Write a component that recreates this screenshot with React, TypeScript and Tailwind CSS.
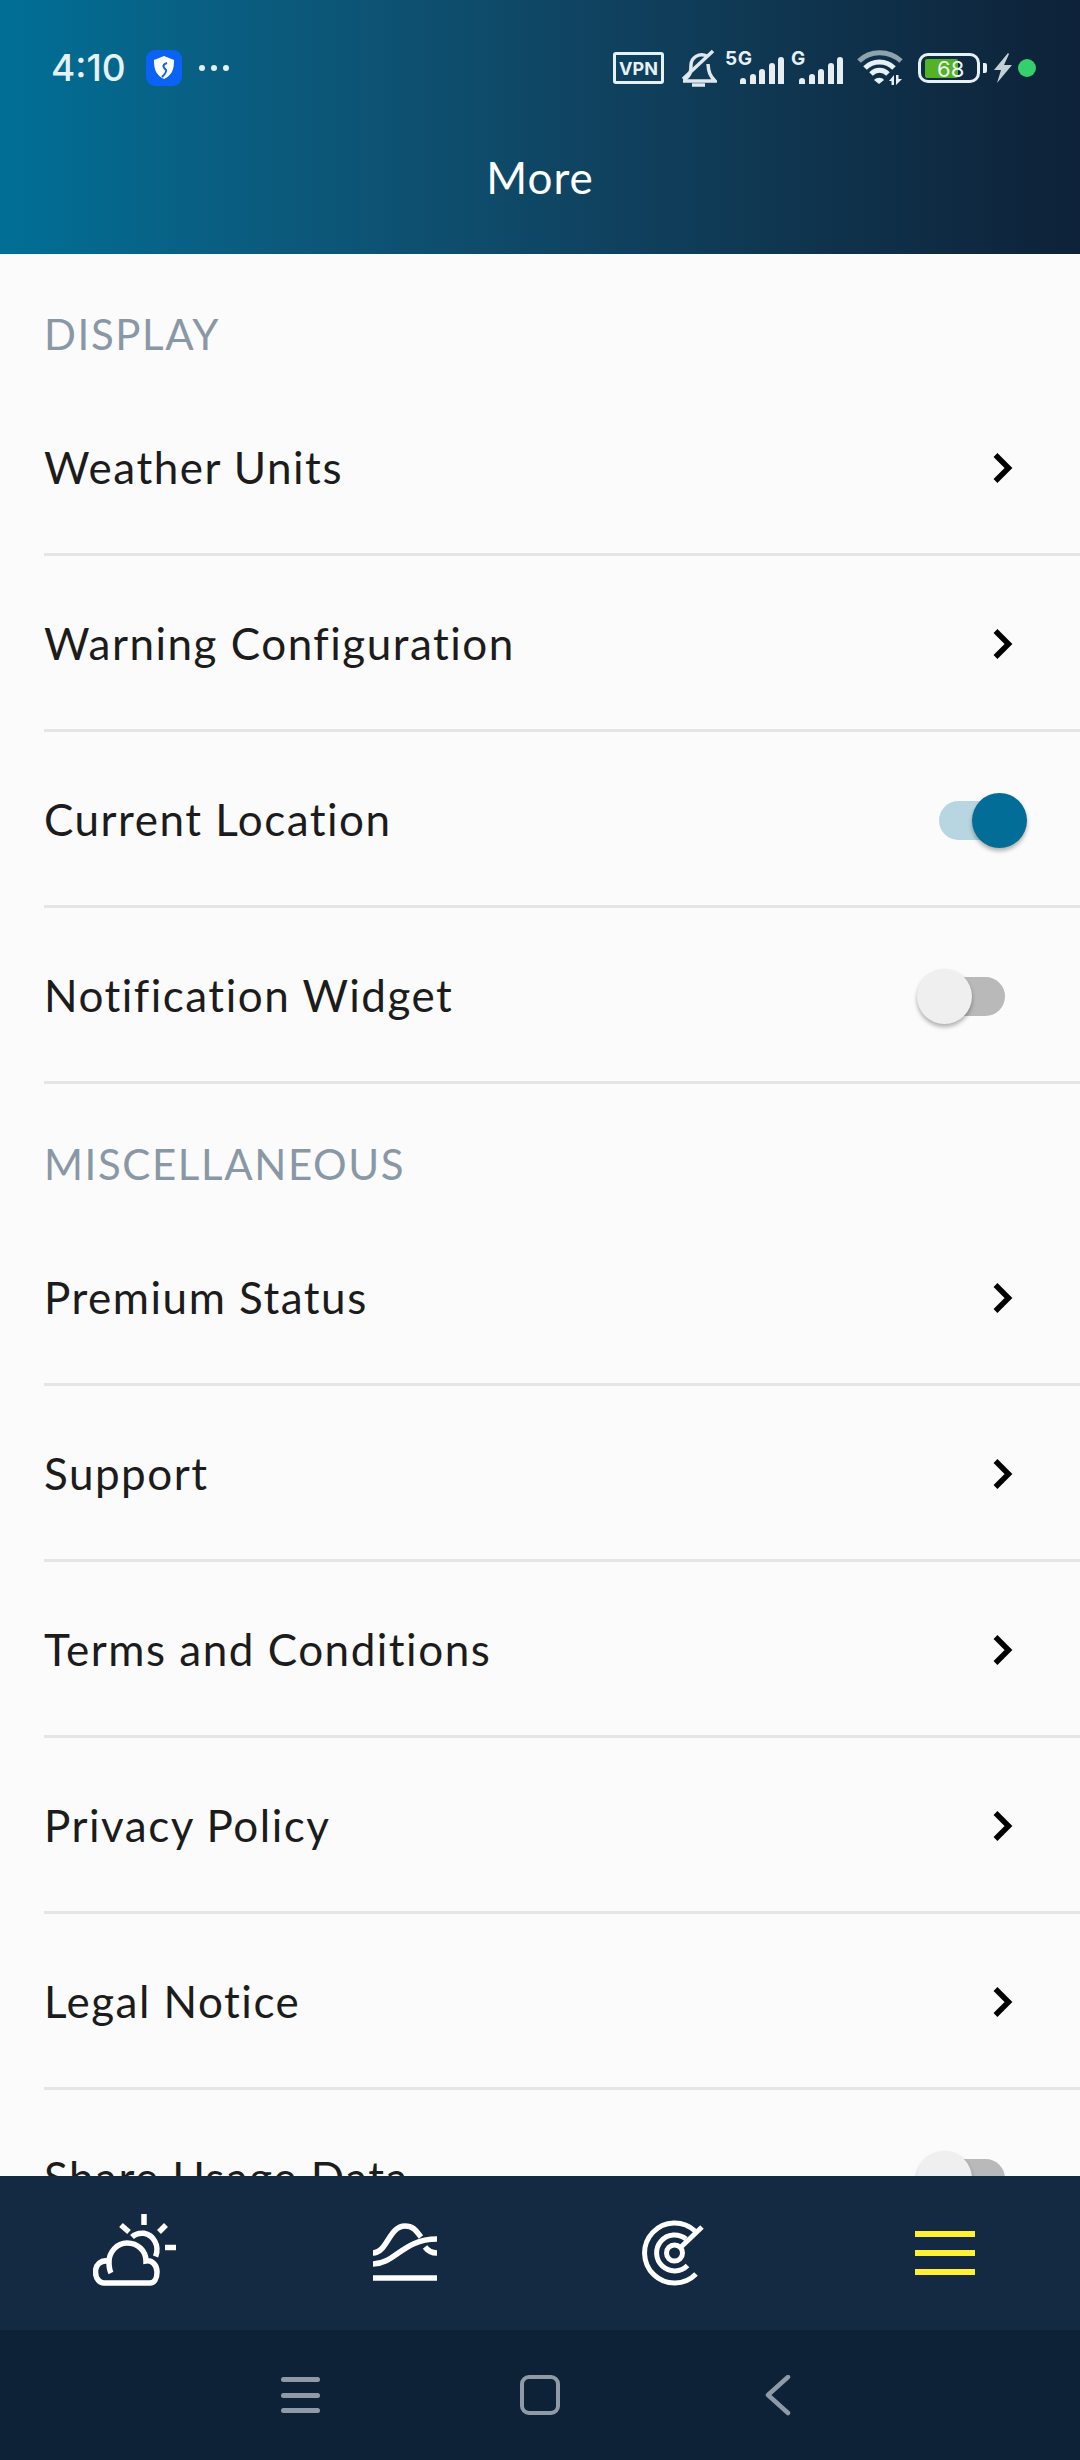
const F = "font-['Lato','Noto_Sans',sans-serif]";

function Chevron() {
  return (
    <svg width="24" height="34" viewBox="0 0 24 34" fill="none" className="shrink-0">
      <path d="M3.5 4 L16.5 17 L3.5 30" stroke="#000" strokeWidth="5.5" />
    </svg>
  );
}

function Toggle({ on }: { on: boolean }) {
  return (
    <div className={`relative w-[66px] h-[39px] rounded-full shrink-0 ${on ? "bg-[#b8d6e2]" : "bg-[#b9b9b9]"}`}>
      <div
        className={`absolute top-[-8px] w-[55px] h-[55px] rounded-full shadow-[0_3px_4px_rgba(0,0,0,0.3)] ${
          on ? "left-[33px] bg-[#026d96]" : "left-[-22px] bg-[#efefef]"
        }`}
      />
    </div>
  );
}

function Row({ label, toggle }: { label: string; toggle?: "on" | "off" }) {
  return (
    <div className="ml-[44px] h-[176px] shrink-0 flex items-center border-b-[3px] border-[#e5e5e5] pt-[3px]">
      <span className="text-[44px] leading-[56px] tracking-[1.5px] text-[#1c1c1c] mb-[3px]">{label}</span>
      <div className="ml-auto flex items-center">
        {toggle ? (
          <div className="mr-[75px]">
            <Toggle on={toggle === "on"} />
          </div>
        ) : (
          <div className="mr-[64px]">
            <Chevron />
          </div>
        )}
      </div>
    </div>
  );
}

function Section({ title }: { title: string }) {
  return (
    <div className="h-[126px] shrink-0 pl-[44px] pt-[52px]">
      <span className="block text-[42px] leading-[56px] tracking-[1.6px] text-[#8a98a6]">{title}</span>
    </div>
  );
}

function Signal({ label, w, ml }: { label: string; w: number; ml: string }) {
  const hs = [6, 10, 15, 21, 27];
  return (
    <div className={`relative h-[32px] flex items-end justify-end gap-[3.5px] ${ml}`} style={{ width: w }}>
      <span className="absolute left-0 top-[-2px] text-[19px] leading-[18px] font-bold tracking-[0.5px] text-[#e6f1f6] font-['Inter',sans-serif]">
        {label}
      </span>
      {hs.map((h) => (
        <div key={h} className="w-[6px] bg-[#e6eef2] rounded-t-[3px]" style={{ height: h }} />
      ))}
    </div>
  );
}

function StatusBar() {
  return (
    <div className="h-[92px] pt-[44px] pl-[51px] pr-[44px] flex items-center text-[#e6f1f6]">
      <span className="text-[37px] leading-[44px] font-medium font-['Inter',sans-serif]">4:10</span>
      <svg width="36" height="36" viewBox="0 0 36 36" className="ml-[20px]">
        <rect width="36" height="36" rx="9" fill="#0a63f5" />
        <path d="M18 6 L28 10 C28 20 26 25 18 29 C10 25 8 20 8 10 Z" fill="#fff" />
        <path d="M21 13 C15 15 18 18 20 20 C21 22 18 25 16 27" stroke="#0a63f5" strokeWidth="2" fill="none" />
      </svg>
      <div className="ml-[17px] flex gap-[6px]">
        <div className="w-[6px] h-[6px] rounded-full bg-[#e6f1f6]" />
        <div className="w-[6px] h-[6px] rounded-full bg-[#e6f1f6]" />
        <div className="w-[6px] h-[6px] rounded-full bg-[#e6f1f6]" />
      </div>
      <div className="ml-auto flex items-center">
        <div className="w-[51px] h-[32px] border-[3px] border-[#e6f1f6] rounded-[3px] flex items-center justify-center text-[18px] font-bold font-['Inter',sans-serif]">
          VPN
        </div>
        <svg width="36" height="38" viewBox="0 0 36 38" className="ml-[17px]" fill="none" stroke="#dfe8ec" strokeWidth="3.5">
          <path d="M10 16 C10 9 18 3 26 7" />
          <path d="M10 16 C10 22 10 26 3 31" />
          <path d="M27 15 C27.5 23 29 27 34 32 H2" />
          <path d="M32 2 L2 30" />
          <path d="M11 36 H24" />
        </svg>
        <Signal label="5G" w={59} ml="ml-[8px]" />
        <Signal label="G" w={52} ml="ml-[7px]" />
        <svg width="46" height="36" viewBox="0 0 46 36" className="ml-[14px]" fill="none">
          <path d="M2 11 C13 0 32 0 44 11" stroke="#8fa3ae" strokeWidth="5" />
          <path d="M8 18 C16 10 29 10 37 18" stroke="#e6f1f6" strokeWidth="5" />
          <path d="M14 24 C19 19 26 19 31 24" stroke="#e6f1f6" strokeWidth="5" />
          <path d="M17 30 L22 34 L27 30 C25 27 20 27 17 30 Z" fill="#e6f1f6" />
          <path d="M37 25 V35 H34.5 V31 H32 Z" fill="#e6f1f6" />
          <path d="M39 35 V25 H41.5 V29 H45 Z" fill="#e6f1f6" />
        </svg>
        <div className="ml-[15px] relative w-[62px] h-[30px] border-[3px] border-[#e6f1f6] rounded-[10px] flex items-center pl-[4px]">
          <div className="w-[33px] h-[19px] bg-[#54b227] rounded-[2px]" />
          <span className="absolute left-[16px] top-[-2px] text-[22px] leading-[30px] text-[#eef6f2] font-['Inter',sans-serif]">68</span>
        </div>
        <div className="ml-[3px] w-[4px] h-[10px] rounded-r-[2px] bg-[#e6f1f6]" />
        <svg width="18" height="30" viewBox="0 0 18 30" className="ml-[7px]">
          <path d="M14 0 L0 17 H7 L3 30 L18 12 H10 L15 1 Z" fill="#c5d0d6" />
        </svg>
        <div className="ml-[6px] w-[18px] h-[18px] rounded-full bg-[#33d06c]" />
      </div>
    </div>
  );
}

function TabBar() {
  return (
    <div className="h-[154px] shrink-0 bg-[#132a42] flex items-start">
      <div className="flex-1 flex justify-center pt-[38px]">
        <svg width="84" height="73" viewBox="0 0 84 73" fill="none" stroke="#fff" strokeWidth="5.5">
          <path d="M11 69 H57 C61 69 64 65 64 58 C64 51 59 46 53 47 C53 37 45 29 34 29 C24 29 16 38 16 48 C16 52 16.5 56 18 59" />
          <path d="M16 47.5 C8 45 2.5 51 2.5 58 C2.5 65 7 69 11 69" />
          <path d="M39 23 C43 19 47 19 51 19.3 C60 21 67 31 62.6 42.6" />
          <path d="M51 0 V11" />
          <path d="M28 11 L36 18" />
          <path d="M73 11 L66 18" />
          <path d="M72 33.5 H83" />
        </svg>
      </div>
      <div className="flex-1 flex justify-center pt-[47px]">
        <svg width="66" height="58" viewBox="0 0 64 58" fill="none" stroke="#fff" strokeWidth="5.5">
          <path d="M0 30 C14 30 16 3 32 3 C41 3 44 9 48 14" />
          <path d="M0 41 C22 41 30 16 64 16" />
          <path d="M52 24 C55 28 58 30 64 30" />
          <path d="M0 55 H64" />
        </svg>
      </div>
      <div className="flex-1 flex justify-center pt-[44px]">
        <svg width="66" height="68" viewBox="0 0 66 68" fill="none" stroke="#fff" strokeWidth="5">
          <path d="M53 11 A30 30 0 1 0 54 54" />
          <path d="M44 19 A18 18 0 1 0 45.5 45.5" />
          <circle cx="32.5" cy="33" r="8" />
          <path d="M39 27 L60 7" />
        </svg>
      </div>
      <div className="flex-1 flex justify-center pt-[55px]">
        <div className="w-[60px] flex flex-col gap-[13px]">
          <div className="h-[6px] bg-[#fff035]" />
          <div className="h-[6px] bg-[#fff035]" />
          <div className="h-[6px] bg-[#fff035]" />
        </div>
      </div>
    </div>
  );
}

function NavBar() {
  return (
    <div className="h-[130px] shrink-0 bg-[#0d2237] flex items-start pl-[281px] pt-[45px]">
      <div className="w-[39px] mt-[2px] flex flex-col gap-[10.5px]">
        <div className="h-[5px] rounded-full bg-[#8f9aa6]" />
        <div className="h-[5px] rounded-full bg-[#8f9aa6]" />
        <div className="h-[5px] rounded-full bg-[#8f9aa6]" />
      </div>
      <div className="ml-[200px] w-[40px] h-[40px] border-[4px] border-[#8f9aa6] rounded-[9px]" />
      <svg width="26" height="42" viewBox="0 0 26 42" fill="none" className="ml-[205px]">
        <path d="M23 2 L3 20 L23 38" stroke="#8f9aa6" strokeWidth="4.5" strokeLinecap="round" strokeLinejoin="round" />
      </svg>
    </div>
  );
}

export default function App() {
  return (
    <div className={`w-[1080px] h-[2460px] flex flex-col overflow-hidden bg-[#fbfbfb] ${F}`}>
      <div className="h-[254px] shrink-0 bg-gradient-to-r from-[#006f96] to-[#0d2238] text-white">
        <StatusBar />
        <div className="text-center text-[44px] leading-[56px] tracking-[1px] pt-[57px]">More</div>
      </div>
      <div className="flex-1 min-h-0 overflow-hidden flex flex-col">
        <Section title="DISPLAY" />
        <Row label="Weather Units" />
        <Row label="Warning Configuration" />
        <Row label="Current Location" toggle="on" />
        <Row label="Notification Widget" toggle="off" />
        <Section title="MISCELLANEOUS" />
        <Row label="Premium Status" />
        <Row label="Support" />
        <Row label="Terms and Conditions" />
        <Row label="Privacy Policy" />
        <Row label="Legal Notice" />
        <Row label="Share Usage Data" toggle="off" />
      </div>
      <TabBar />
      <NavBar />
    </div>
  );
}
